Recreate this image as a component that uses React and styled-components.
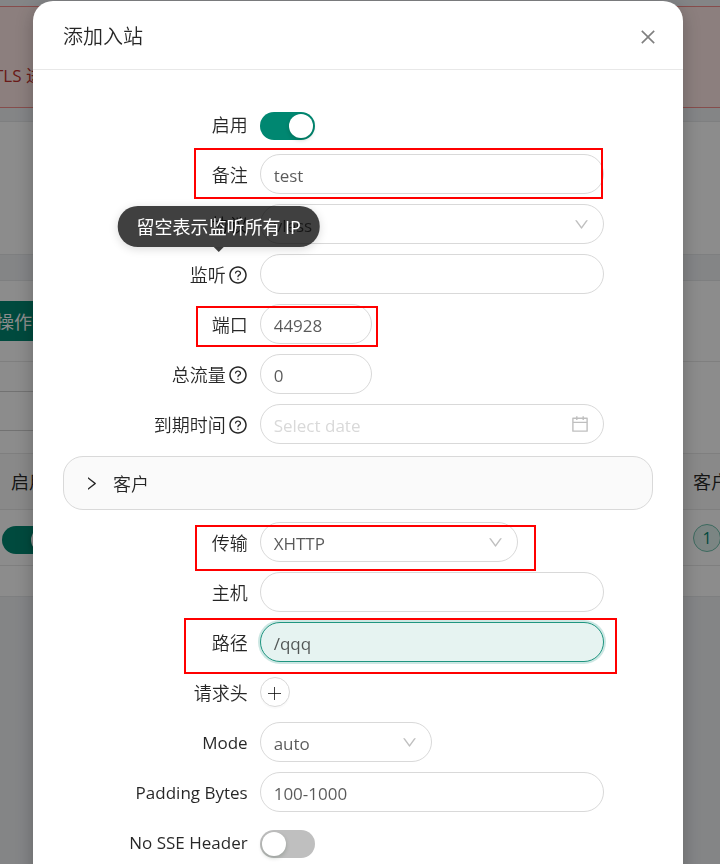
import React from "react";
import styled, { createGlobalStyle, css } from "styled-components";
import {
  AiOutlineCalendar,
  AiOutlineClose,
  AiOutlineDown,
  AiOutlineQuestionCircle,
  AiOutlineRight,
} from "react-icons/ai";

const GlobalStyle = createGlobalStyle`
  * {
    box-sizing: border-box;
  }
  body {
    margin: 0;
    background-color: #f0f2f5;
    color: rgba(0, 0, 0, 0.85);
    font-family: "Open Sans", "Noto Sans CJK SC", sans-serif;
    font-size: 18px;
    line-height: 28px;
    overflow: hidden;
  }
  input, select, button {
    font-family: inherit;
  }
`;

/* ---------- page behind the dialog ---------- */

const Page = styled.main`
  margin-left: -20px;
  height: 100vh;
  padding-top: 6px;
  overflow: hidden;
`;
const Alert = styled.div`
  background-color: #ffe8e6;
  border: 1px solid #f58c8a;
  border-width: 1px 0;
  color: #c0302c;
  padding: 55px 14px 17px;
  font-size: 17px;
  white-space: nowrap;
`;
const Card = styled.section`
  background-color: white;
  border: 1px solid #e6e8ea;
  border-width: 1px 0;
`;
const Stats = styled(Card)`
  height: 134px;
  margin: 13px 0 25px;
`;
const Toolbar = styled.div`
  padding: 20px 0;
  border-bottom: 1px solid #e8e8e8;
`;
const ActionButton = styled.button`
  height: 40px;
  padding: 0 16px;
  border: none;
  border-radius: 4px;
  background-color: #008771;
  color: white;
  font-size: 18px;
`;
const SearchBox = styled.input`
  display: block;
  width: 240px;
  height: 40px;
  margin: 29px 0 22px;
  border: 1px solid #d0d0d0;
`;
const InboundTable = styled.table`
  width: 100%;
  margin-bottom: 30px;
  border-collapse: collapse;
  table-layout: fixed;
  th,
  td {
    height: 56px;
    padding: 0;
    border-bottom: 1px solid #e8e8e8;
    font-weight: 400;
    text-align: left;
  }
  th {
    background-color: #fafafa;
    border-top: 1px solid #e8e8e8;
  }
  th:first-child,
  td:first-child {
    width: 98px;
    text-align: center;
  }
  th:last-child,
  td:last-child {
    width: 27px;
    white-space: nowrap;
  }
`;
const Badge = styled.span`
  display: inline-block;
  width: 28px;
  height: 28px;
  border: 1px solid #6fc0ad;
  border-radius: 14px;
  background-color: #e0f2ee;
  color: #008771;
  font-size: 16px;
  line-height: 26px;
  text-align: center;
`;

/* ---------- dialog ---------- */

const Mask = styled.div`
  position: fixed;
  inset: 0;
  overflow: hidden;
  padding: 1px 37px 0 33px;
  background-color: rgba(0, 0, 0, 0.45);
`;
const Dialog = styled.div`
  min-height: 100vh;
  background-color: white;
  border-radius: 20px 20px 0 0;
  box-shadow: 0 4px 20px rgba(0, 0, 0, 0.25);
`;
const DialogHeader = styled.header`
  display: flex;
  align-items: center;
  justify-content: space-between;
  height: 69px;
  padding: 3px 25px 0 30px;
  border-bottom: 1px solid #e8e8e8;
`;
const Title = styled.h1`
  margin: 0;
  font-size: 20px;
  font-weight: 350;
`;
const CloseButton = styled.button`
  display: flex;
  padding: 0;
  border: none;
  background: none;
  color: rgba(0, 0, 0, 0.5);
  font-size: 20px;
`;
const Form = styled.form`
  padding: 29px 30px;
`;
const Row = styled.div`
  position: relative;
  display: grid;
  grid-template-columns: 8fr 14fr 2fr;
  align-items: center;
  height: 50px;
`;
const LabelCell = styled.div`
  display: flex;
  justify-content: flex-end;
  padding: 2px 12px 0 0;
  white-space: nowrap;
`;
const Label = styled.label`
  position: relative;
  display: flex;
  align-items: center;
  gap: 2px;
  font-size: ${(props) => (props.$latin ? "17px" : "18px")};
  font-weight: ${(props) => (props.$latin ? 400 : 350)};
`;
const Field = styled.div`
  position: relative;
  display: flex;
  align-items: center;
  width: ${(props) => props.$width || "100%"};
  > svg {
    position: absolute;
    right: 14px;
    color: rgba(0, 0, 0, 0.25);
    pointer-events: none;
  }
`;
const control = css`
  width: 100%;
  height: 40px;
  padding: 2px 14px 0 13px;
  border: 1px solid #d9d9d9;
  border-radius: 20px;
  outline: none;
  background-color: white;
  color: rgba(0, 0, 0, 0.65);
  font-size: 17px;
  &::placeholder {
    color: #d9d9d9;
    opacity: 1;
  }
`;
const Input = styled.input`
  ${control}
  ${(props) =>
    props.$active &&
    css`
      background-color: #e6f3f1;
      border-color: #1f9580;
      box-shadow: 0 0 0 2px rgba(0, 135, 113, 0.2);
    `}
`;
const Select = styled.select`
  ${control}
  appearance: none;
`;
const Switch = styled.input`
  appearance: none;
  display: inline-flex;
  flex: none;
  width: 55px;
  height: 28px;
  margin: 4px 0 0;
  padding: 2px;
  border-radius: 14px;
  background-color: #bfbfbf;
  vertical-align: middle;
  &::before {
    content: "";
    width: 24px;
    height: 24px;
    border-radius: 50%;
    background-color: white;
    box-shadow: 0 2px 4px rgba(0, 35, 11, 0.2);
  }
  &:checked {
    justify-content: flex-end;
    background-color: #008771;
  }
`;
const RoundButton = styled.button`
  display: flex;
  align-items: center;
  justify-content: center;
  width: 30px;
  height: 30px;
  padding: 2px 0 0;
  border: 1px solid #d9d9d9;
  border-radius: 50%;
  background-color: white;
  box-shadow: 0 2px 0 rgba(0, 0, 0, 0.02);
  color: rgba(0, 0, 0, 0.75);
`;
const Panel = styled.button`
  display: flex;
  align-items: center;
  gap: 13px;
  width: 100%;
  height: 54px;
  margin: 7px 0;
  padding: 0 19px;
  border: 1px solid #d9d9d9;
  border-radius: 20px;
  background-color: #fafafa;
  color: rgba(0, 0, 0, 0.85);
  font-size: 18px;
  font-weight: 350;
`;
const Tooltip = styled.span`
  position: absolute;
  z-index: 2;
  bottom: calc(100% + 14px);
  left: 50%;
  transform: translateX(-50%);
  padding: 7px 19px 6px;
  border-radius: 20px;
  background-color: rgba(0, 0, 0, 0.75);
  box-shadow: 0 2px 10px rgba(0, 0, 0, 0.15);
  color: white;
  font-weight: 400;
  white-space: nowrap;
  &::after {
    content: "";
    position: absolute;
    top: 100%;
    left: 50%;
    margin-left: -5px;
    border: 5px solid transparent;
    border-top-color: rgba(0, 0, 0, 0.75);
    border-bottom: none;
  }
`;
const Highlight = styled.span`
  position: absolute;
  z-index: 1;
  inset: ${(props) => props.$inset};
  border: 2px solid #ff0000;
  pointer-events: none;
`;

function PlusIcon() {
  return (
    <svg width="13" height="13" viewBox="0 0 13 13" stroke="currentColor" aria-hidden="true">
      <path d="M6.5 0v13M0 6.5h13" />
    </svg>
  );
}

function FormRow({ id, label, latin, help, tip, highlight, children }) {
  return (
    <Row>
      <LabelCell>
        <Label htmlFor={id} $latin={latin}>
          {label}
          {help && <AiOutlineQuestionCircle size={20} />}
          {tip && <Tooltip role="tooltip">{tip}</Tooltip>}
        </Label>
      </LabelCell>
      {children}
      {highlight && <Highlight $inset={highlight} />}
    </Row>
  );
}

function SelectField({ id, value, width }) {
  return (
    <Field $width={width}>
      <Select id={id} defaultValue={value}>
        <option>{value}</option>
      </Select>
      <AiOutlineDown size={17} />
    </Field>
  );
}

function Background() {
  return (
    <Page>
      <Alert>TLS 进</Alert>
      <Stats />
      <Card>
        <Toolbar>
          <ActionButton>操作</ActionButton>
        </Toolbar>
        <SearchBox aria-label="search" />
        <InboundTable>
          <thead>
            <tr>
              <th>启用</th>
              <th />
              <th>客户</th>
            </tr>
          </thead>
          <tbody>
            <tr>
              <td>
                <Switch type="checkbox" role="switch" aria-label="启用" defaultChecked />
              </td>
              <td />
              <td>
                <Badge>1</Badge>
              </td>
            </tr>
          </tbody>
        </InboundTable>
      </Card>
    </Page>
  );
}

export default function App() {
  return (
    <>
      <GlobalStyle />
      <Background />
      <Mask>
        <Dialog role="dialog" aria-labelledby="title">
          <DialogHeader>
            <Title id="title">添加入站</Title>
            <CloseButton aria-label="close">
              <AiOutlineClose />
            </CloseButton>
          </DialogHeader>
          <Form>
            <FormRow id="enable" label="启用">
              <Switch id="enable" type="checkbox" role="switch" defaultChecked />
            </FormRow>
            <FormRow id="remark" label="备注" highlight="-1px 50px 0 131px">
              <Input id="remark" defaultValue="test" />
            </FormRow>
            <FormRow id="protocol" label="协议">
              <SelectField id="protocol" value="vless" />
            </FormRow>
            <FormRow id="listen" label="监听" help tip="留空表示监听所有 IP">
              <Input id="listen" />
            </FormRow>
            <FormRow id="port" label="端口" highlight="7px 275px 2px 133px">
              <Field $width="112px">
                <Input id="port" inputMode="numeric" defaultValue="44928" />
              </Field>
            </FormRow>
            <FormRow id="total" label="总流量" help>
              <Field $width="112px">
                <Input id="total" inputMode="numeric" defaultValue="0" />
              </Field>
            </FormRow>
            <FormRow id="expiry" label="到期时间" help>
              <Field>
                <Input id="expiry" placeholder="Select date" />
                <AiOutlineCalendar size={20} />
              </Field>
            </FormRow>
            <Panel type="button" aria-expanded="false">
              <AiOutlineRight size={17} />
              客户
            </Panel>
            <FormRow id="network" label="传输" highlight="8px 117px -4px 132px">
              <SelectField id="network" value="XHTTP" width="258px" />
            </FormRow>
            <FormRow id="host" label="主机">
              <Input id="host" />
            </FormRow>
            <FormRow id="path" label="路径" highlight="1px 36px -7px 121px">
              <Input id="path" defaultValue="/qqq" $active />
            </FormRow>
            <FormRow id="headers" label="请求头">
              <RoundButton id="headers" type="button">
                <PlusIcon />
              </RoundButton>
            </FormRow>
            <FormRow id="mode" label="Mode" latin>
              <SelectField id="mode" value="auto" width="172px" />
            </FormRow>
            <FormRow id="padding" label="Padding Bytes" latin>
              <Input id="padding" defaultValue="100-1000" />
            </FormRow>
            <FormRow id="sse" label="No SSE Header" latin>
              <Switch id="sse" type="checkbox" role="switch" />
            </FormRow>
          </Form>
        </Dialog>
      </Mask>
    </>
  );
}
